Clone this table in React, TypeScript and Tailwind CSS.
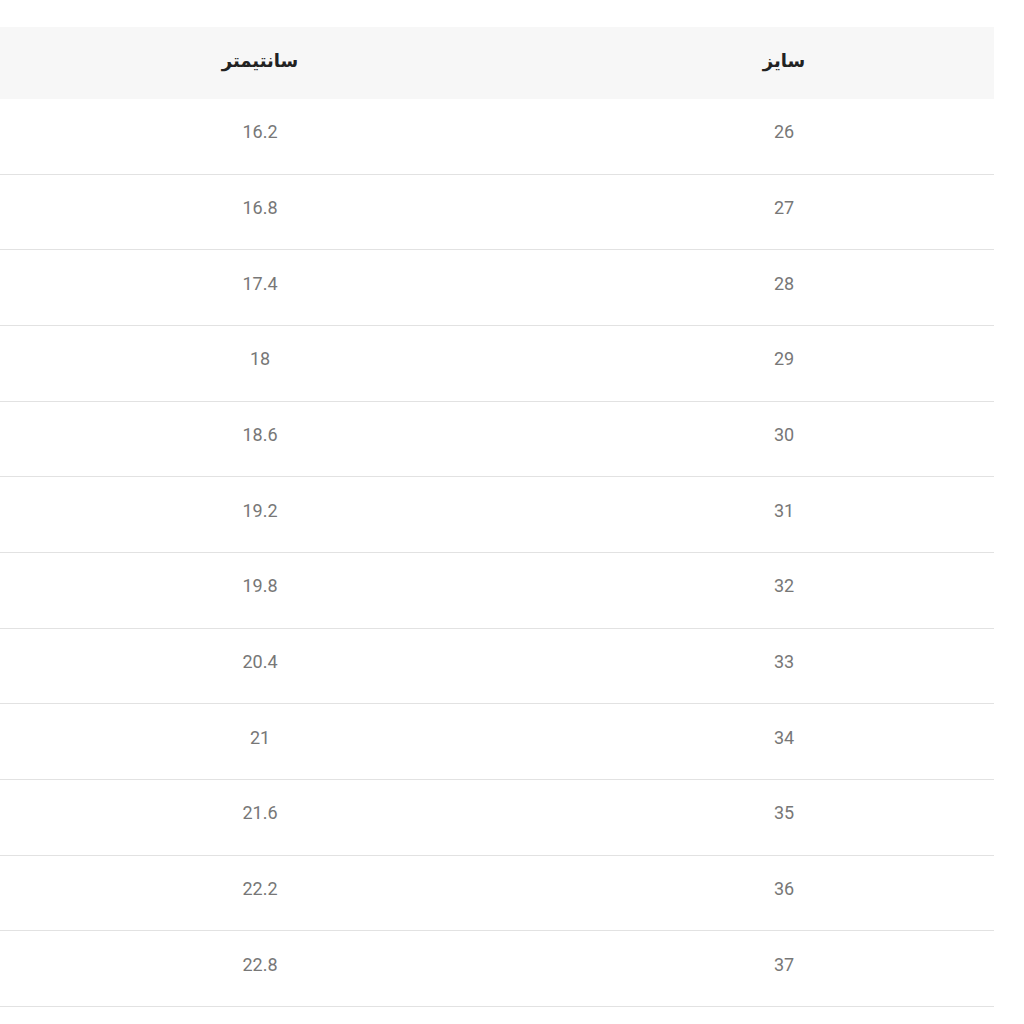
const rows: [number, string][] = [
  [26, "16.2"], [27, "16.8"], [28, "17.4"], [29, "18"], [30, "18.6"], [31, "19.2"],
  [32, "19.8"], [33, "20.4"], [34, "21"], [35, "21.6"], [36, "22.2"], [37, "22.8"],
];

export default function App() {
  return (
    <div className="w-[1024px] h-[1024px] bg-white overflow-hidden pt-[27px]">
      <div className="w-[994px]">
        <div className="grid grid-cols-[574px_420px] h-[72px] bg-[#f7f7f7] items-center font-['DejaVu_Sans',sans-serif] font-bold text-[18px] text-[#222]">
          <div dir="rtl" className="text-center pr-[54px] -mt-[5px]">سانتیمتر</div>
          <div dir="rtl" className="text-center -mt-[5px]">سایز</div>
        </div>
        {rows.map(([size, cm]) => (
          <div key={size} className="grid grid-cols-[574px_420px] h-[75.67px] border-b border-[#e2e2e2] items-center font-['Roboto',sans-serif] text-[18px] text-[#777]">
            <div className="text-center pr-[54px] -mt-[9px]">{cm}</div>
            <div className="text-center -mt-[9px]">{size}</div>
          </div>
        ))}
      </div>
    </div>
  );
}
